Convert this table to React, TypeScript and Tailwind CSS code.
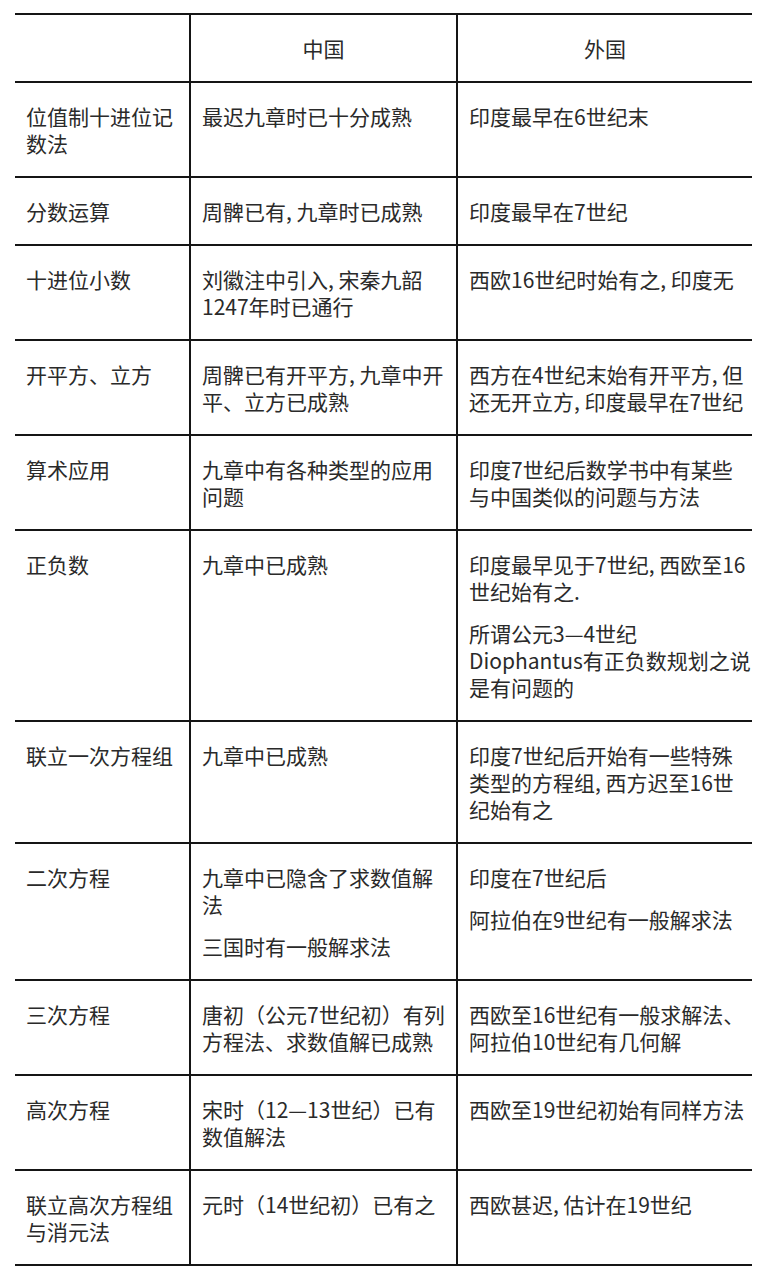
const rows: { name: string; china: string[]; foreign: string[] }[] = [
  { name: '位值制十进位记数法', china: ['最迟九章时已十分成熟'], foreign: ['印度最早在6世纪末'] },
  { name: '分数运算', china: ['周髀已有, 九章时已成熟'], foreign: ['印度最早在7世纪'] },
  { name: '十进位小数', china: ['刘徽注中引入, 宋秦九韶1247年时已通行'], foreign: ['西欧16世纪时始有之, 印度无'] },
  {
    name: '开平方、立方',
    china: ['周髀已有开平方, 九章中开平、立方已成熟'],
    foreign: ['西方在4世纪末始有开平方, 但还无开立方, 印度最早在7世纪'],
  },
  { name: '算术应用', china: ['九章中有各种类型的应用问题'], foreign: ['印度7世纪后数学书中有某些与中国类似的问题与方法'] },
  {
    name: '正负数',
    china: ['九章中已成熟'],
    foreign: ['印度最早见于7世纪, 西欧至16世纪始有之.', '所谓公元3—4世纪\nDiophantus有正负数规划之说是有问题的'],
  },
  {
    name: '联立一次方程组',
    china: ['九章中已成熟'],
    foreign: ['印度7世纪后开始有一些特殊类型的方程组, 西方迟至16世纪始有之'],
  },
  {
    name: '二次方程',
    china: ['九章中已隐含了求数值解法', '三国时有一般解求法'],
    foreign: ['印度在7世纪后', '阿拉伯在9世纪有一般解求法'],
  },
  {
    name: '三次方程',
    china: ['唐初（公元7世纪初）有列方程法、求数值解已成熟'],
    foreign: ['西欧至16世纪有一般求解法、阿拉伯10世纪有几何解'],
  },
  { name: '高次方程', china: ['宋时（12—13世纪）已有数值解法'], foreign: ['西欧至19世纪初始有同样方法'] },
  { name: '联立高次方程组与消元法', china: ['元时（14世纪初）已有之'], foreign: ['西欧甚迟, 估计在19世纪'] },
];

function Paras({ items }: { items: string[] }) {
  return (
    <div className="flex flex-col gap-[15px]">
      {items.map((t) => (
        <p key={t} className="whitespace-pre-line">
          {t}
        </p>
      ))}
    </div>
  );
}

export default function App() {
  return (
    <div
      className="min-h-[1280px] w-[766px] bg-white pt-[13px] pl-[15px] text-[#2a2a2a]"
      style={{ fontFamily: '"Noto Sans CJK SC", "Noto Sans", sans-serif' }}
    >
      <table className="w-[737px] table-fixed border-collapse text-[21px] leading-[27px]">
        <colgroup>
          <col className="w-[175px]" />
          <col className="w-[267px]" />
          <col className="w-[295px]" />
        </colgroup>
        <thead>
          <tr>
            <th className="border-y-2 border-[#151515] pt-[20px] pb-[19px] font-normal"></th>
            <th className="border-y-2 border-l-2 border-[#151515] pt-[20px] pb-[19px] font-normal">中国</th>
            <th className="border-y-2 border-l-2 border-[#151515] pt-[20px] pb-[19px] font-normal">外国</th>
          </tr>
        </thead>
        <tbody>
          {rows.map((r) => (
            <tr key={r.name}>
              <td className="border-y-2 border-[#151515] pt-[20px] pb-[19px] pl-[11px] pr-[8px] align-top">{r.name}</td>
              <td className="border-y-2 border-l-2 border-[#151515] pt-[20px] pb-[19px] pl-[11px] pr-[8px] align-top">
                <Paras items={r.china} />
              </td>
              <td className="border-y-2 border-l-2 border-[#151515] pt-[20px] pb-[19px] pl-[11px] pr-0 align-top">
                <Paras items={r.foreign} />
              </td>
            </tr>
          ))}
        </tbody>
      </table>
    </div>
  );
}
